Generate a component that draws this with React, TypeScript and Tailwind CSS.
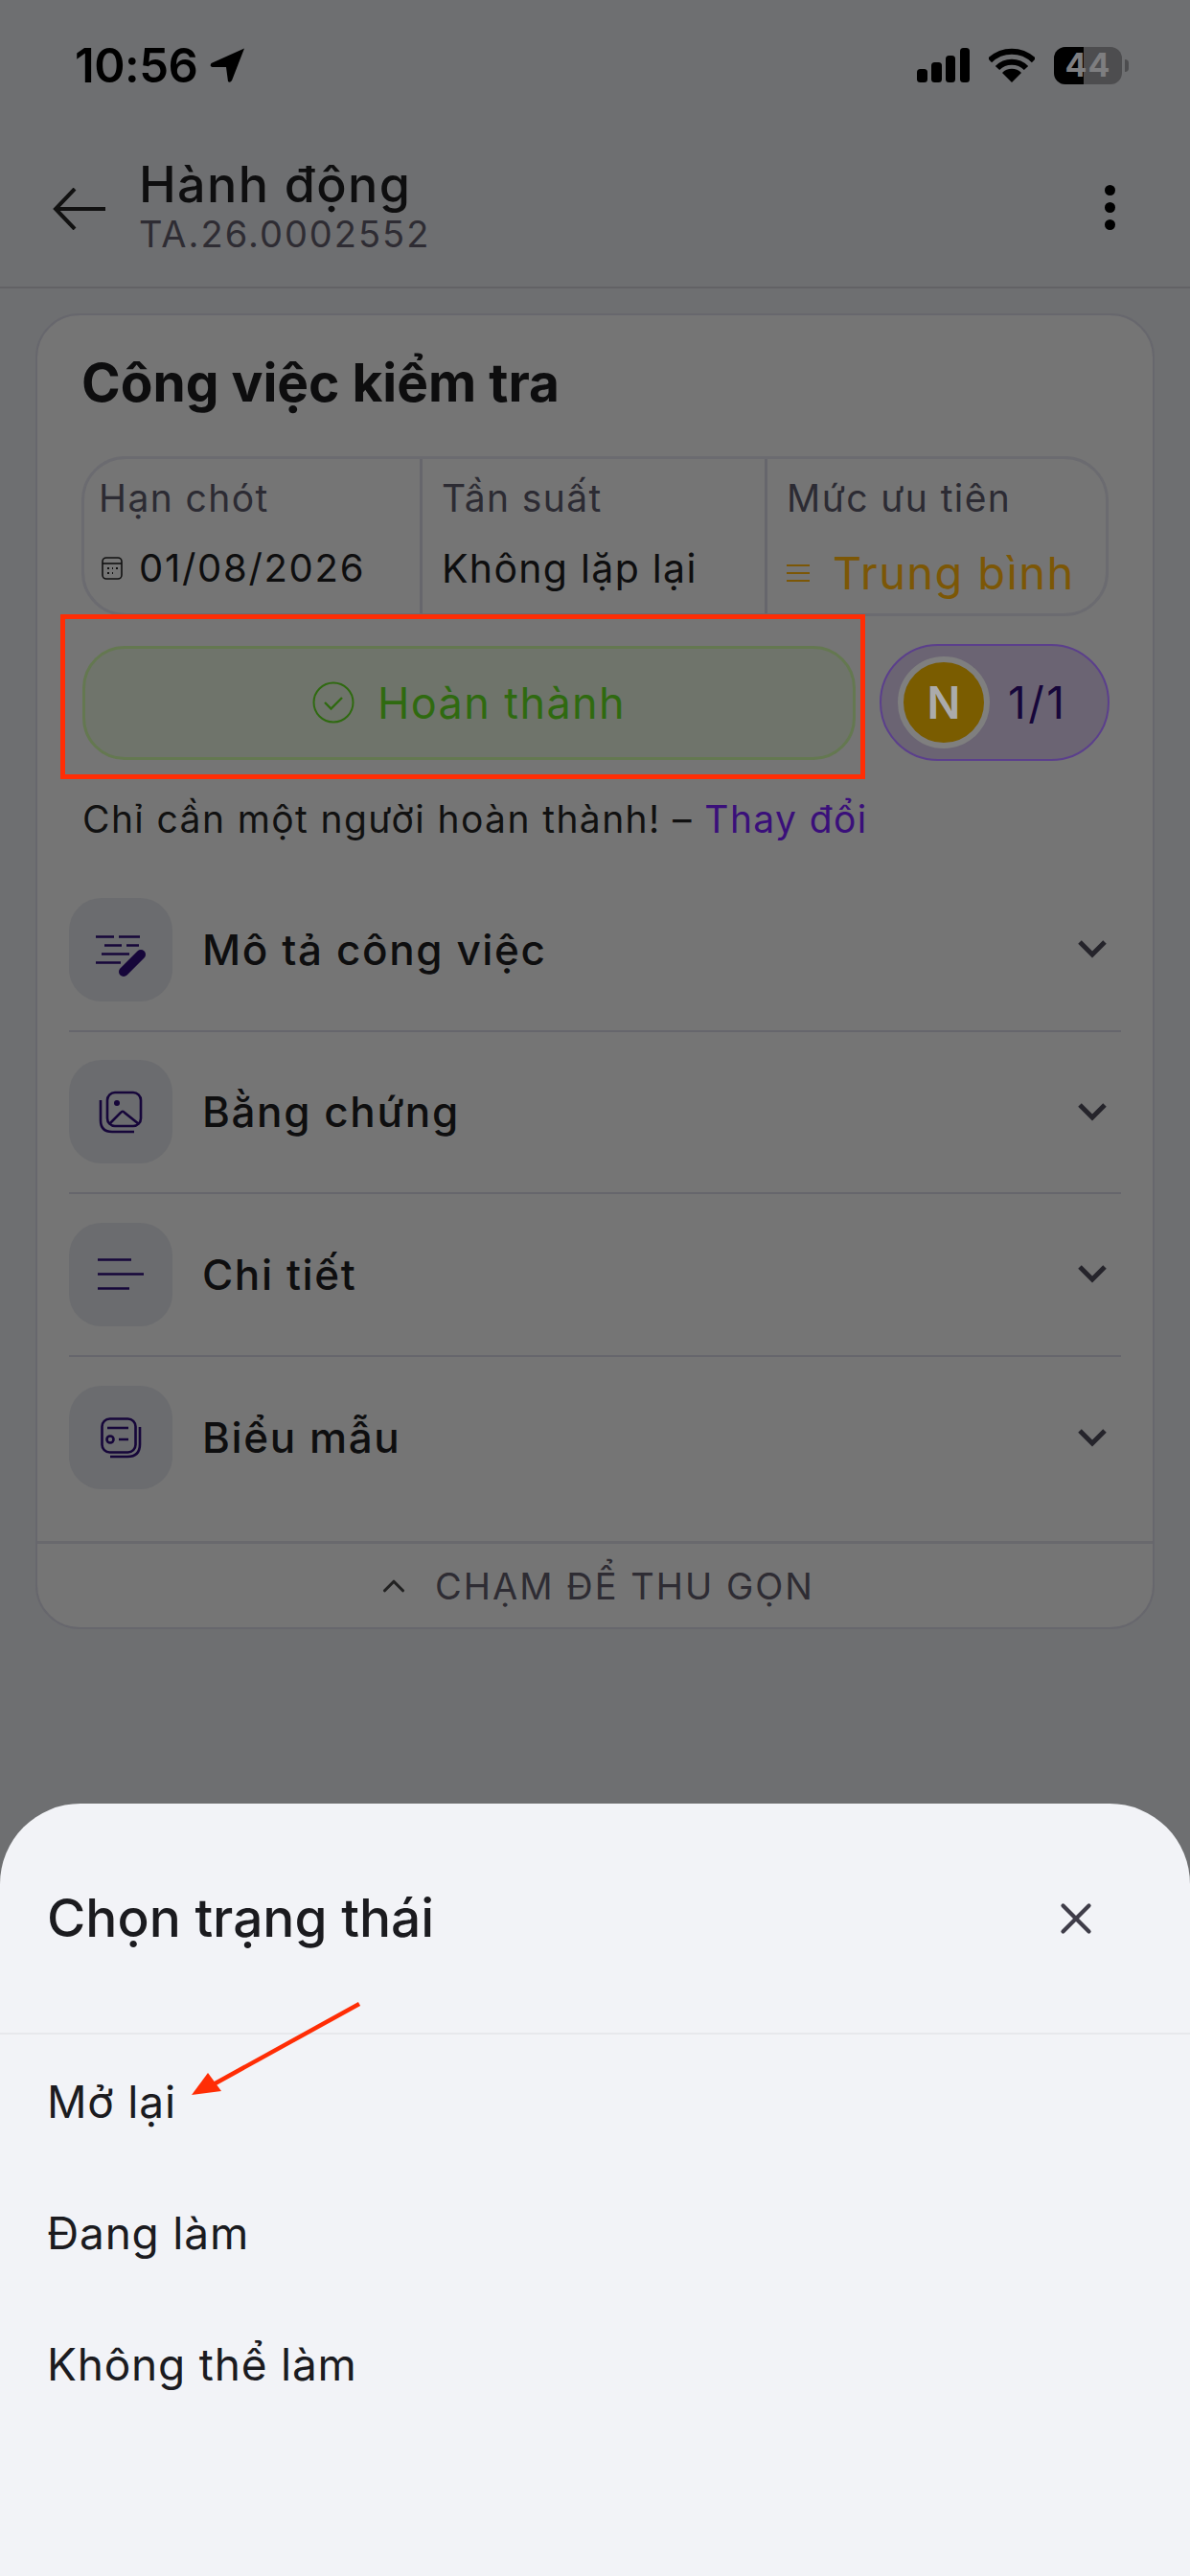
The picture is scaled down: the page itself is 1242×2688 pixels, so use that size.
import { ChevronUp, X } from 'lucide-react';
import type { ReactNode } from 'react';

const font = { fontFamily: 'Inter, "Noto Sans", sans-serif' };

function StatusBar() {
  return (
    <div className="flex h-[136px] items-center justify-between pl-[78px] pr-[64px]">
      <div className="flex items-center gap-[13px]">
        <span className="text-[49px] leading-none font-semibold tracking-[-0.5px] text-black">10:56</span>
        <svg width="38" height="38" viewBox="0 0 38 38">
          <path d="M36 1.5 L1.5 17 Q-1 21 4 21 L17 21 L19 36 Q21 38 23 35 Z" fill="#000" />
        </svg>
      </div>
      <div className="flex items-center gap-[20px]">
        <svg width="55" height="36" viewBox="0 0 55 36" fill="#000">
          <rect x="0" y="22" width="11" height="14" rx="3.5" />
          <rect x="15" y="15" width="11" height="21" rx="3.5" />
          <rect x="30" y="8" width="10" height="28" rx="3.5" />
          <rect x="45" y="0" width="10" height="36" rx="3.5" />
        </svg>
        <svg width="48" height="36" viewBox="0 0 48 36" fill="none" stroke="#000" strokeWidth="6">
          <path d="M1 13 A33 33 0 0 1 47 13" />
          <path d="M9 21 A21 21 0 0 1 39 21" />
          <path d="M24 36 L14 26 A14 14 0 0 1 34 26 Z" fill="#000" stroke="none" />
        </svg>
        <div className="flex items-center gap-[3px]">
          <div className="relative flex h-[39px] w-[71px] items-center justify-center overflow-hidden rounded-[12px] bg-[#4d4d4f]">
            <div className="absolute inset-y-0 left-0 w-[31px] bg-black" />
            <span className="relative text-[34px] leading-none font-bold tracking-[1px] text-[#7e7e80]">44</span>
          </div>
          <div className="h-[13px] w-[4px] rounded-r-full bg-[#4d4d4f]" />
        </div>
      </div>
    </div>
  );
}

function Header() {
  return (
    <div className="flex h-[165px] items-start justify-between border-b-2 border-[#626265] pt-[29px] pr-[78px] pl-[54px]">
      <div className="flex items-center gap-[35px]">
        <svg width="56" height="44" viewBox="0 0 56 44" fill="none" stroke="#111" strokeWidth="4" className="mt-[4px]">
          <path d="M4 22 H56 M24 1 L4 22 L24 43" />
        </svg>
        <div className="flex flex-col">
          <span className="text-[52px] leading-[56px] font-medium tracking-[1.4px] text-[#0e0e0f]">Hành động</span>
          <span className="text-[38px] leading-[46px] tracking-[2px] text-[#2e2c33]">TA.26.0002552</span>
        </div>
      </div>
      <div className="mt-[28px] flex flex-col gap-[7px]">
        <div className="size-[11px] rounded-full bg-black" />
        <div className="size-[11px] rounded-full bg-black" />
        <div className="size-[11px] rounded-full bg-black" />
      </div>
    </div>
  );
}

function InfoCell({ label, className, children }: { label: string; className: string; children: ReactNode }) {
  return (
    <div className={className}>
      <div className="text-[39px] leading-[46px] tracking-[1.4px] text-[#2c2b33]">{label}</div>
      {children}
    </div>
  );
}

function InfoBox() {
  return (
    <div className="-mx-[1px] flex h-[167px] rounded-[46px] border-[3px] border-[#6b6b70]">
      <InfoCell label="Hạn chót" className="w-[353px] border-r-[3px] border-[#66666c] pt-[18px] pl-[15px]">
        <div className="mt-[27px] flex items-center gap-[16px] pl-[2px]">
          <svg width="24" height="26" viewBox="0 0 24 26" fill="none" stroke="#111" strokeWidth="1.6">
            <rect x="2" y="2" width="20" height="22" rx="4" />
            <path d="M2 8 H22" />
            <path d="M7 13 h2 M12 13 h1 M16 13 h2 M7 18 h2 M12 18 h1" strokeWidth="2" />
          </svg>
          <span className="text-[40px] leading-[46px] tracking-[1.7px] text-[#0e0e0f]">01/08/2026</span>
        </div>
      </InfoCell>
      <InfoCell label="Tần suất" className="w-[360px] border-r-[3px] border-[#66666c] pt-[18px] pl-[20px]">
        <div className="mt-[27px] text-[41px] leading-[46px] tracking-[1.3px] text-[#0e0e0f]">Không lặp lại</div>
      </InfoCell>
      <InfoCell label="Mức ưu tiên" className="flex-1 pt-[18px] pl-[20px]">
        <div className="mt-[27px] flex items-center gap-[24px]">
          <svg width="24" height="20" viewBox="0 0 24 20" stroke="#7c5706" strokeWidth="2">
            <path d="M0 2 H24 M0 10 H24 M0 18 H24" />
          </svg>
          <span className="text-[47px] leading-[56px] tracking-[1.4px] text-[#7c5706]">Trung bình</span>
        </div>
      </InfoCell>
    </div>
  );
}

function ActionRow() {
  return (
    <div className="mt-[29px] -mr-[2px] flex items-center gap-[25px]">
      <button className="flex h-[119px] w-[807px] shrink-0 items-center justify-center gap-[24px] rounded-[44px] border-[3px] border-[#647850] bg-[#6f746b]">
        <svg width="44" height="44" viewBox="0 0 44 44" fill="none" stroke="#2f6a10" strokeWidth="2">
          <circle cx="22" cy="22" r="20.5" />
          <path d="M13 22 L19.5 28.5 L31 17" strokeWidth="2.4" />
        </svg>
        <span className="text-[45px] leading-none tracking-[1.4px] text-[#2f6a10]">Hoàn thành</span>
      </button>
      <div className="flex h-[122px] w-[240px] shrink-0 items-center gap-[19px] rounded-full border-2 border-[#5b3f8c] bg-[#6b6473] pl-[17px]">
        <div className="flex size-[96px] items-center justify-center rounded-full border-[6px] border-[#7f7f7f] bg-[#7a5c00] text-[46px] font-semibold text-[#ababab]">
          N
        </div>
        <span className="text-[46px] leading-none tracking-[2.5px] text-[#16063a]">1/1</span>
      </div>
    </div>
  );
}

function DescIcon() {
  return (
    <svg width="52" height="43" viewBox="0 0 52 43" fill="none" stroke="#16063a" strokeWidth="2.6" className="mt-[14px]">
      <path d="M0 1.5 H19 M24 1.5 H46 M9 10.5 H27 M32 10.5 H45 M6 19.5 H35 M0 28.5 H26" />
      <path d="M29 38 L47 20" strokeWidth="10" strokeLinecap="round" />
    </svg>
  );
}

function EvidenceIcon() {
  return (
    <svg width="46" height="45" viewBox="0 0 46 45" fill="none" stroke="#16063a" strokeWidth="2.6">
      <rect x="9" y="2" width="35" height="35" rx="8" />
      <path d="M2 10 V31 Q2 43 14 43 H37" />
      <path d="M11 35 L23 23 Q25 20.5 27 23 L42 35" />
      <circle cx="19" cy="13" r="3" fill="#16063a" stroke="none" />
    </svg>
  );
}

function DetailIcon() {
  return (
    <svg width="48" height="33" viewBox="0 0 48 33" stroke="#16063a" strokeWidth="2.4">
      <path d="M0 1.5 H35 M0 16.5 H48 M0 31.5 H33" />
    </svg>
  );
}

function FormIcon() {
  return (
    <svg width="43" height="43" viewBox="0 0 43 43" fill="none" stroke="#16063a" strokeWidth="2.6">
      <rect x="1.5" y="1.5" width="35" height="35" rx="8" />
      <path d="M7 11 H29 M19 23 H29" />
      <circle cx="10" cy="23" r="3.5" />
      <path d="M41 10 V28 Q41 41 28 41 H10" />
    </svg>
  );
}

const rows = [
  { title: 'Mô tả công việc', icon: <DescIcon /> },
  { title: 'Bằng chứng', icon: <EvidenceIcon /> },
  { title: 'Chi tiết', icon: <DetailIcon /> },
  { title: 'Biểu mẫu', icon: <FormIcon /> },
];

function Rows() {
  return (
    <div className="mt-[29px] flex flex-col pr-[33px] pl-[33px]">
      {rows.map((r, i) => (
        <div
          key={r.title}
          className={`flex h-[169.5px] items-center gap-[31px] ${i < rows.length - 1 ? 'border-b-2 border-[#66666c]' : ''}`}
        >
          <div className="flex size-[108px] items-center justify-center rounded-[34px] bg-[#6b6c6f]">{r.icon}</div>
          <span className="flex-1 text-[44px] leading-none font-medium tracking-[1.6px] text-[#0e0e0f]">{r.title}</span>
          <svg width="30" height="19" viewBox="0 0 30 19" fill="none" stroke="#25242b" strokeWidth="5" className="mr-[15px]">
            <path d="M2 2 L15 15 L28 2" />
          </svg>
        </div>
      ))}
    </div>
  );
}

function Card() {
  return (
    <div className="mx-[37px] mt-[26px] flex h-[1373px] flex-col rounded-[46px] border-2 border-[#67676d] bg-[#757575]">
      <div className="px-[47px] pt-[39px]">
        <h1 className="-ml-[1px] text-[55px] leading-[62px] font-bold text-[#0d0d0e]">Công việc kiểm tra</h1>
        <div className="mt-[46px]">
          <InfoBox />
        </div>
        <ActionRow />
        <p className="mt-[38px] text-[39px] leading-[46px] tracking-[1.4px] text-[#111]">
          Chỉ cần một người hoàn thành! – <span className="text-[#3a0f7a]">Thay đổi</span>
        </p>
      </div>
      <Rows />
      <div className="mt-auto flex h-[90px] items-center justify-center gap-[24px] border-t-[3px] border-[#69696d]">
        <ChevronUp size={38} strokeWidth={2} className="text-[#222]" />
        <span className="text-[38px] leading-none tracking-[2px] text-[#2e2c33]">CHẠM ĐỂ THU GỌN</span>
      </div>
    </div>
  );
}

function Sheet() {
  return (
    <div className="absolute inset-x-0 bottom-0 h-[806px] rounded-t-[84px] bg-[#f2f3f7]">
      <div className="flex h-[241px] items-center justify-between border-b-2 border-[#e7e8ec] pr-[92px] pl-[49px]">
        <span className="text-[55px] leading-none font-medium text-[#1b1b1f]">Chọn trạng thái</span>
        <X size={54} strokeWidth={1.9} className="text-[#3f3d49]" />
      </div>
      <div className="flex flex-col pt-[1px]">
        {['Mở lại', 'Đang làm', 'Không thể làm'].map((s) => (
          <div key={s} className="flex h-[137px] items-center pl-[49px] text-[46px] leading-none tracking-[0.8px] text-[#1b1b1f]">
            {s}
          </div>
        ))}
      </div>
    </div>
  );
}

export default function App() {
  return (
    <div className="relative h-[2688px] w-[1242px] overflow-hidden bg-[#6e6f71]" style={font}>
      <StatusBar />
      <Header />
      <Card />
      <Sheet />
      {/* red annotations drawn over the screenshot */}
      <div className="absolute top-[641px] left-[63px] h-[172px] w-[840px] border-[5px] border-[#ff2d05]" />
      <svg className="absolute top-[2085px] left-[195px]" width="190" height="110" viewBox="0 0 190 110" fill="#ff2d05">
        <path d="M180 6 L26 91" stroke="#ff2d05" strokeWidth="4.5" />
        <path d="M5 101 L22 78 L36 97 Z" />
      </svg>
    </div>
  );
}
